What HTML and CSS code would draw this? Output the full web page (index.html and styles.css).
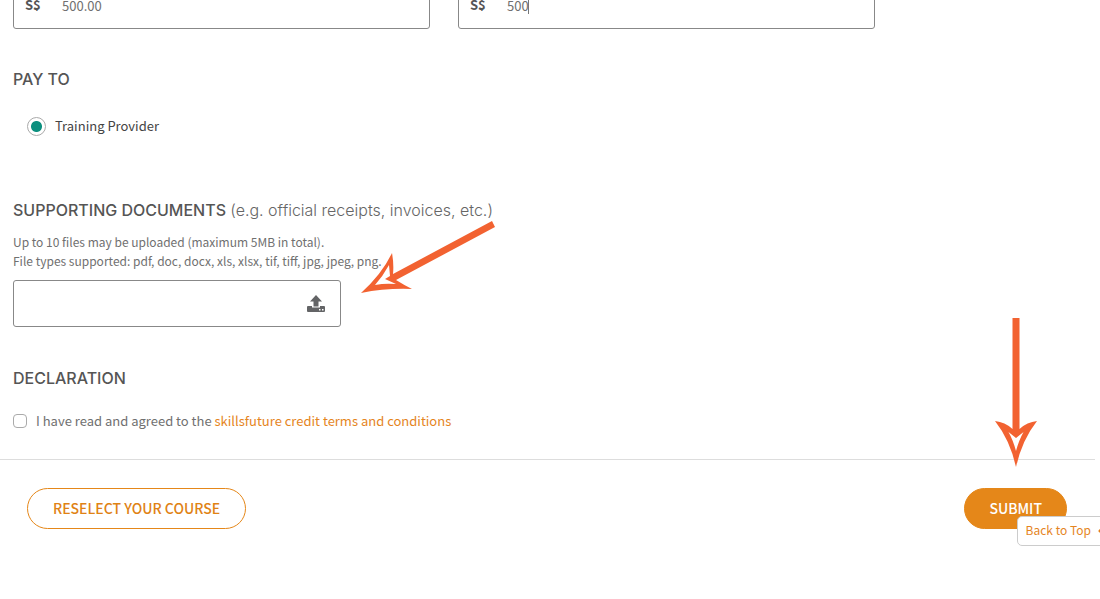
FILE: index.html
```html
<!DOCTYPE html>
<html lang="en">
<head>
    <meta charset="UTF-8">
    <meta name="viewport" content="width=device-width, initial-scale=1.0">
    <title>SkillsFuture Credit Claim</title>
    <link rel="stylesheet" href="styles.css">
</head>
<body>
    <form class="claim-form">
        <div class="form-body">
            <div class="amounts">
                <label class="amount">
                    <span class="currency">S$</span>
                    <input type="text" name="fee" value="500.00">
                </label>
                <label class="amount">
                    <span class="currency">S$</span>
                    <input type="text" name="claim" value="500">
                    <span class="caret"></span>
                </label>
            </div>

            <h2>PAY TO</h2>
            <div class="pay-to">
                <input type="radio" id="provider" name="payTo" checked>
                <label for="provider">Training Provider</label>
            </div>

            <h2>SUPPORTING DOCUMENTS <span class="hint">(e.g. official receipts, invoices, etc.)</span></h2>
            <p class="note">Up to 10 files may be uploaded (maximum 5MB in total).<br>
                File types supported: pdf, doc, docx, xls, xlsx, tif, tiff, jpg, jpeg, png.</p>
            <div class="upload">
                <input type="file" id="documents" aria-label="Supporting documents" multiple>
                <svg width="18" height="18" viewBox="0 0 18 18">
                    <path fill="#636466" d="M9 0l6 6.500h-3.500v5h-5v-5H3z"/>
                    <path fill="#636466" fill-rule="evenodd" d="M1 11h4v1.500h8V11h4q1 0 1 1v4q0 1-1 1H1q-1 0-1-1v-4q0-1 1-1zM12 14v1.500h1.500V14zM15 14v1.500h1.500V14z"/>
                </svg>
            </div>

            <h2>DECLARATION</h2>
            <div class="declaration">
                <input type="checkbox" id="agree">
                <label for="agree">I have read and agreed to the <a href="#">skillsfuture credit terms and conditions</a></label>
            </div>
        </div>

        <div class="actions">
            <button type="button" class="btn btn-outline">RESELECT YOUR COURSE</button>
            <button type="submit" class="btn btn-primary">SUBMIT</button>
        </div>
    </form>

    <a class="back-to-top" href="#">Back to Top
        <svg width="12" height="8" viewBox="0 0 12 8"><path fill="none" stroke="#e5811a" stroke-width="3" stroke-linecap="round" d="M2 5l4-4 4 4"/></svg>
    </a>

    <!-- Arrows pointing at the upload box and the submit button -->
    <svg class="arrow arrow-upload" width="136" height="74" viewBox="360 220 136 74">
        <path fill="#f26231" fill-rule="evenodd" d="M492 221L495 227L396 280Q404 285 412 289Q386 288 361 293Q382 274 392 253Q394 264 393 274ZM389 265Q383 276 375 285Q385 283 396 284L385 279L390 276Z"/>
    </svg>
    <svg class="arrow arrow-submit" width="42" height="150" viewBox="995 318 42 150">
        <path fill="#f26231" fill-rule="evenodd" d="M1012.500 318H1019.500V429Q1027 422 1037 421Q1022 440 1016 467Q1010 440 995 421Q1005 422 1012.500 429ZM1008.500 432Q1013 440 1016 451Q1019 440 1023.500 432L1016 438Z"/>
    </svg>
</body>
</html>
```

FILE: styles.css
```css
* {
    box-sizing: border-box;
}

body {
    margin: 0;
    font-family: "Noto Sans CJK SC", "Open Sans", sans-serif;
    font-size: 13px;
    line-height: 20px;
    color: #707070;
    background-color: #fff;
    overflow: hidden;
}

input, button {
    font-family: inherit;
    color: inherit;
    margin: 0;
}

a {
    color: #e5851e;
    text-decoration: none;
}

.claim-form {
    margin-right: 5px;
}

.form-body {
    padding: 0 13px 28px;
    border-bottom: 1px solid #ddd;
}

/* the form is scrolled part way down */
.amounts {
    display: grid;
    grid-template-columns: 1fr 1fr;
    gap: 28px;
    max-width: 862px;
    margin-top: -19px;
}

.amount {
    position: relative;
    display: flex;
    align-items: center;
    height: 48px;
    padding: 0 11px;
    border: 1px solid #888;
    border-radius: 3px;
}

.currency {
    width: 37px;
    font-weight: bold;
    color: #555;
}

.amount input {
    flex: 1;
    min-width: 0;
    padding: 0;
    border: none;
    outline: none;
    font-size: 13px;
}

.caret {
    position: absolute;
    left: 69px;
    top: 17px;
    width: 1px;
    height: 15px;
    background-color: #777;
}

h2 {
    margin: 40px 0 0;
    font-family: Inter, sans-serif;
    font-size: 16px;
    font-weight: 500;
    line-height: 20px;
    color: #555;
}

.hint {
    font-weight: 300;
    color: #666;
}

.pay-to {
    display: flex;
    align-items: center;
    gap: 9px;
    margin: 27px 0 64px;
    padding-left: 14px;
    font-size: 13px;
    color: #444;
}

.pay-to + h2 {
    margin-top: 0;
}

.pay-to input {
    appearance: none;
    width: 19px;
    height: 19px;
    border: 1px solid #aaa;
    border-radius: 50%;
    background: radial-gradient(circle, #0b8f7e 5px, #fff 6px);
}

.note {
    margin: 12px 0 10px;
    font-size: 12px;
    line-height: 19px;
}

.upload {
    position: relative;
    display: flex;
    align-items: center;
    justify-content: flex-end;
    max-width: 328px;
    height: 47px;
    padding-right: 15px;
    border: 1px solid #888;
    border-radius: 3px;
}

.upload input {
    position: absolute;
    inset: 0;
    width: 100%;
    opacity: 0;
}

.upload + h2 {
    margin-top: 41px;
}

.declaration {
    display: flex;
    align-items: center;
    gap: 9px;
    margin-top: 23px;
}

.declaration input {
    appearance: none;
    width: 14px;
    height: 14px;
    border: 1px solid #aaa;
    border-radius: 4px;
}

.actions {
    display: flex;
    justify-content: space-between;
    padding: 28px 28px 28px 27px;
}

.btn {
    height: 41px;
    padding: 0 25px 1px;
    border: 1px solid #e58719;
    border-radius: 21px;
    font-size: 14px;
    font-weight: 500;
    cursor: pointer;
}

.btn-outline {
    color: #e08214;
    background-color: #fff;
}

.btn-primary {
    padding: 0 24px 1px;
    color: #fff;
    background-color: #e58719;
}

.back-to-top {
    position: fixed;
    top: 516px;
    right: -18px;
    display: flex;
    align-items: center;
    gap: 7px;
    height: 30px;
    padding: 0 7px 2px 8px;
    border: 1px solid #ccc;
    border-radius: 5px;
    background-color: #fff;
    font-size: 12px;
}

.arrow {
    position: absolute;
    pointer-events: none;
}

.arrow-upload {
    left: 360px;
    top: 220px;
}

.arrow-submit {
    left: 995px;
    top: 318px;
}
```
